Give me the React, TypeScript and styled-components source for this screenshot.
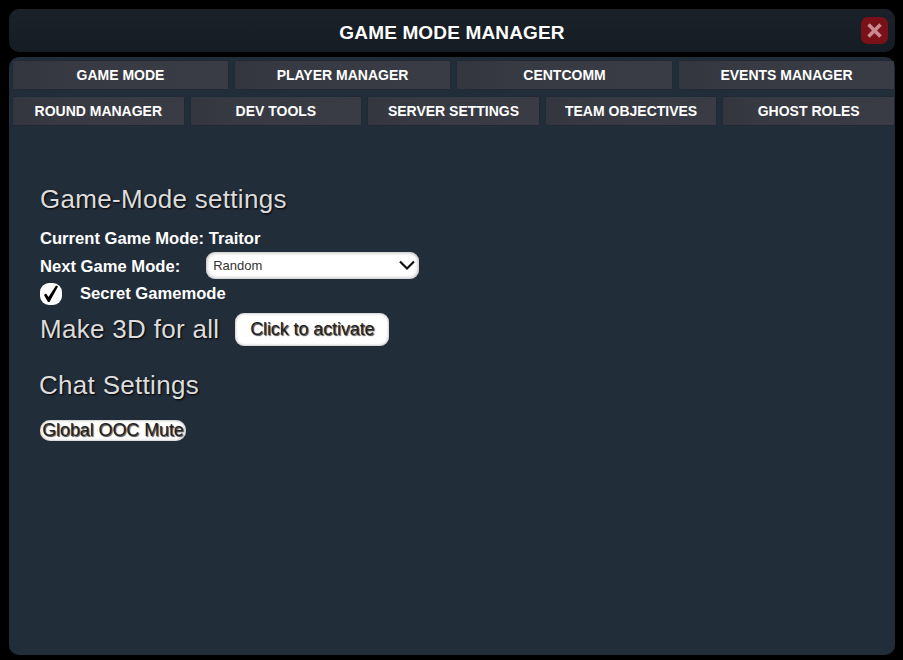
import styled, { createGlobalStyle } from 'styled-components';

const GlobalStyle = createGlobalStyle`
	html, body {
		margin: 0;
		height: 100%;
		background: #000;
	}
	#root {
		height: 100%;
	}
`

const Page = styled.div`
	box-sizing: border-box;
	width: 903px;
	height: 660px;
	padding: 9px 8px 5px 9px;
	display: flex;
	flex-direction: column;
	gap: 5px;
	font-family: "Liberation Sans", Arial, sans-serif;
	background: #000;
	overflow: hidden;
`
const Header = styled.header`
	position: relative;
	box-sizing: border-box;
	flex: 0 0 43px;
	padding-top: 5px;
	display: flex;
	align-items: center;
	justify-content: center;
	border-radius: 10px;
	background: linear-gradient(#1a2129, #161c23);
	color: #fff;
	font-size: 19px;
	font-weight: 700;
	letter-spacing: 0.15px;
`
const Close = styled.button`
	position: absolute;
	top: 8px;
	right: 7px;
	width: 27px;
	height: 27px;
	padding: 0;
	display: flex;
	align-items: center;
	justify-content: center;
	border: none;
	border-radius: 7px;
	background: #7a1119;
`
const Panel = styled.main`
	flex: 1;
	display: flex;
	flex-direction: column;
	border-radius: 10px;
	background: #222d3a;
	padding: 4px 1px 0 4px;
`
const TabRow = styled.nav`
	display: flex;
	gap: 7px;
	height: 28px;
	margin-bottom: 8px;
`
const Tab = styled.button`
	flex: 1 1 0;
	min-width: 0;
	padding: 0;
	border: none;
	border-radius: 1px;
	background: linear-gradient(90deg, #33363f 0%, #373a43 25%, #3a3c45 100%);
	box-shadow: 0 0 1px #171c24;
	color: #fff;
	font-family: inherit;
	font-size: 14px;
	font-weight: 700;
	white-space: nowrap;
`
const Content = styled.section`
	display: flex;
	flex-direction: column;
	align-items: flex-start;
	padding: 51px 0 0 27px;
`
const Heading = styled.h2<{ $shift?: number }>`
	margin: 0 0 0 ${({ $shift }) => $shift ?? 0}px;
	color: #dcdcdc;
	font-size: 26px;
	font-weight: 400;
	line-height: 30px;
	letter-spacing: 0.3px;
	text-shadow: 1px 1px 2px #000;
`
const Label = styled.span`
	color: #fff;
	font-size: 16.6px;
	font-weight: 700;
	line-height: 18px;
`
const Current = styled(Label)`
	margin-top: 16px;
`
const SelectRow = styled.div`
	display: flex;
	align-items: center;
	margin-top: 5px;
	height: 28px;
	gap: 26px;
`
const Select = styled.div`
	box-sizing: border-box;
	width: 213px;
	height: 27px;
	margin-bottom: 4px;
	padding: 0 3px 0 7px;
	display: flex;
	align-items: center;
	justify-content: space-between;
	border-radius: 9px;
	background: #fff;
	box-shadow: inset 0 0 4px #9a9a9a;
	color: #333;
	font-size: 13px;
`
const CheckRow = styled.label`
	display: flex;
	align-items: center;
	gap: 18px;
	height: 26px;
`
const CheckBox = styled.span`
	width: 22px;
	height: 22px;
	display: flex;
	align-items: center;
	justify-content: center;
	border-radius: 9px;
	background: #fff;
`
const ActivateRow = styled.div`
	display: flex;
	align-items: center;
	gap: 16px;
	height: 36px;
	margin-top: 4px;
`
const WhiteButton = styled.button`
	padding: 0;
	border: none;
	background: #fff;
	box-shadow: inset 0 0 3px #999;
	color: #222;
	font-family: inherit;
	font-size: 18px;
	letter-spacing: -0.1px;
	text-shadow: 1px 1px 1px #444;
`
const ActivateButton = styled(WhiteButton)`
	width: 154px;
	height: 33px;
	border-radius: 9px;
`
const MuteButton = styled(WhiteButton)`
	width: 146px;
	height: 21px;
	margin-top: 20px;
	border-radius: 10px;
	line-height: 21px;
`
const ChatHeading = styled(Heading)`
	margin-top: 23px;
`

const topTabs = ['GAME MODE', 'PLAYER MANAGER', 'CENTCOMM', 'EVENTS MANAGER'];
const bottomTabs = ['ROUND MANAGER', 'DEV TOOLS', 'SERVER SETTINGS', 'TEAM OBJECTIVES', 'GHOST ROLES'];

const App = () => {
	return (
		<Page>
			<GlobalStyle />
			<Header>
				GAME MODE MANAGER
				<Close aria-label="Close">
					<svg width="17" height="17" viewBox="0 0 17 17">
						<path d="M2.5 2.5 14.5 14.5M14.5 2.5 2.5 14.5" stroke="#c98a90" strokeWidth="3.6" />
					</svg>
				</Close>
			</Header>
			<Panel>
				<TabRow>
					{topTabs.map((tab) => <Tab key={tab}>{tab}</Tab>)}
				</TabRow>
				<TabRow>
					{bottomTabs.map((tab) => <Tab key={tab}>{tab}</Tab>)}
				</TabRow>
				<Content>
					<Heading>Game-Mode settings</Heading>
					<Current>Current Game Mode: Traitor</Current>
					<SelectRow>
						<Label>Next Game Mode:</Label>
						<Select>
							Random
							<svg width="18" height="12" viewBox="0 0 18 12">
								<path d="M2 2.5 9 9.5 16 2.5" fill="none" stroke="#111" strokeWidth="2.2" />
							</svg>
						</Select>
					</SelectRow>
					<CheckRow>
						<CheckBox>
							<svg width="18" height="20" viewBox="0 0 18 20">
								<path d="M2 11 4 9.5 6.5 13 14 1.5 16 2.5 7.5 18 6 18Z" fill="#000" />
							</svg>
						</CheckBox>
						<Label>Secret Gamemode</Label>
					</CheckRow>
					<ActivateRow>
						<Heading>Make 3D for all</Heading>
						<ActivateButton>Click to activate</ActivateButton>
					</ActivateRow>
					<ChatHeading $shift={-1}>Chat Settings</ChatHeading>
					<MuteButton>Global OOC Mute</MuteButton>
				</Content>
			</Panel>
		</Page>
	);
}

export default App;
